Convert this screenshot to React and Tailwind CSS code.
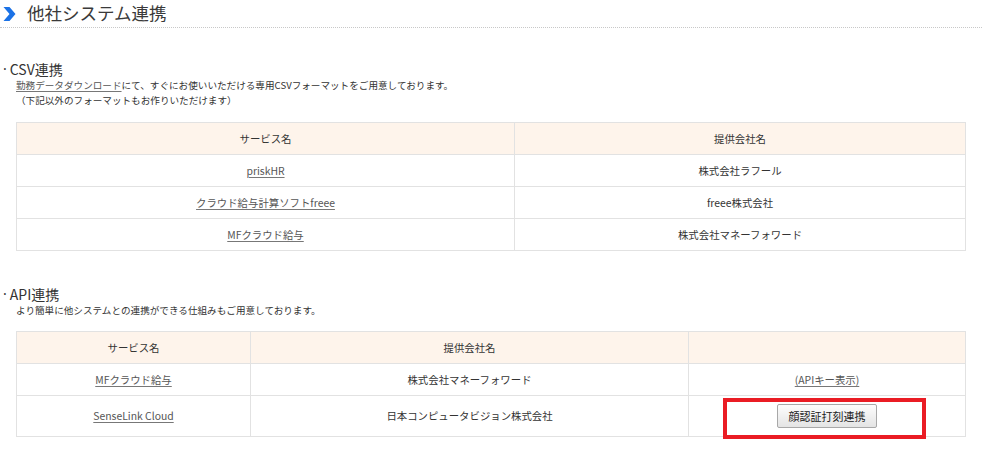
const csvRows = [
  { service: 'priskHR', company: '株式会社ラフール' },
  { service: 'クラウド給与計算ソフトfreee', company: 'freee株式会社' },
  { service: 'MFクラウド給与', company: '株式会社マネーフォワード' },
]

const font = { fontFamily: '"Noto Sans CJK JP", "Noto Sans", sans-serif' }

function Chevron() {
  return (
    <svg width="13" height="14" viewBox="0 0 13 14" className="shrink-0">
      <polygon points="0.5,0 6.5,0 12.5,7 6.5,14 0.5,14 6.5,7" fill="#1b72e6" />
    </svg>
  )
}

function Link({ children }) {
  return <a href="#" className="text-[#555] underline underline-offset-2 decoration-[#777]">{children}</a>
}

function Heading({ children }) {
  return (
    <h2 className="h-[20px] flex items-center text-[14px] leading-[20px] pl-[3px]">
      <span className="mr-[3px]" style={{ fontFamily: '"Noto Sans", sans-serif' }}>·</span>
      <span>{children}</span>
    </h2>
  )
}

export default function App() {
  return (
    <div className="w-[982px] h-[454px] bg-white text-[#333] overflow-hidden" style={font}>
      {/* page title */}
      <div className="h-[28px] flex items-center gap-[11px] pl-[3px] border-b border-dotted border-[#c8c8c8]">
        <Chevron />
        <h1 className="text-[17.5px] leading-none text-[#3a3a3a] -mt-[1px]">他社システム連携</h1>
      </div>

      {/* CSV */}
      <section className="mt-[31px]">
        <Heading>CSV連携</Heading>
        <div className="pl-[16px] text-[9.6px] leading-[15px] mt-[-1px]">
          <p>
            <Link>勤務データダウンロード</Link>にて、すぐにお使いいただける専用CSVフォーマットをご用意しております。
          </p>
          <p>（下記以外のフォーマットもお作りいただけます）</p>
        </div>
        <table className="ml-[16px] mt-[14px] w-[950px] border-collapse text-[10.4px] text-center table-fixed">
          <colgroup>
            <col className="w-[498px]" />
            <col />
          </colgroup>
          <thead>
            <tr className="h-[32px] bg-[#fef4eb]">
              <th className="border border-[#e2e2e2] font-normal">サービス名</th>
              <th className="border border-[#e2e2e2] font-normal">提供会社名</th>
            </tr>
          </thead>
          <tbody>
            {csvRows.map((r) => (
              <tr key={r.service} className="h-[32px]">
                <td className="border border-[#e2e2e2]"><Link>{r.service}</Link></td>
                <td className="border border-[#e2e2e2]">{r.company}</td>
              </tr>
            ))}
          </tbody>
        </table>
      </section>

      {/* API */}
      <section className="mt-[33px]">
        <Heading>API連携</Heading>
        <p className="pl-[16px] text-[9.6px] leading-[15px] mt-[-1px]">
          より簡単に他システムとの連携ができる仕組みもご用意しております。
        </p>
        <table className="ml-[16px] mt-[13px] w-[950px] border-collapse text-[10.4px] text-center table-fixed">
          <colgroup>
            <col className="w-[234px]" />
            <col className="w-[438px]" />
            <col />
          </colgroup>
          <thead>
            <tr className="h-[32px] bg-[#fef4eb]">
              <th className="border border-[#e2e2e2] font-normal">サービス名</th>
              <th className="border border-[#e2e2e2] font-normal">提供会社名</th>
              <th className="border border-[#e2e2e2] font-normal"></th>
            </tr>
          </thead>
          <tbody>
            <tr className="h-[32px]">
              <td className="border border-[#e2e2e2]"><Link>MFクラウド給与</Link></td>
              <td className="border border-[#e2e2e2]">株式会社マネーフォワード</td>
              <td className="border border-[#e2e2e2]"><Link>(APIキー表示)</Link></td>
            </tr>
            <tr className="h-[41px]">
              <td className="border border-[#e2e2e2]"><Link>SenseLink Cloud</Link></td>
              <td className="border border-[#e2e2e2]">日本コンピュータビジョン株式会社</td>
              <td className="border border-[#e2e2e2] relative">
                <button className="w-[100px] h-[24px] align-middle border border-[#a8a8a8] rounded-[2px] bg-gradient-to-b from-[#fdfdfd] to-[#e4e4e4] text-[11px] text-[#222]">
                  顔認証打刻連携
                </button>
                {/* annotation box */}
                <div className="absolute left-[34px] top-[2px] w-[203px] h-[41px] border-[4px] border-[#ea1c24] pointer-events-none" />
              </td>
            </tr>
          </tbody>
        </table>
      </section>
    </div>
  )
}
